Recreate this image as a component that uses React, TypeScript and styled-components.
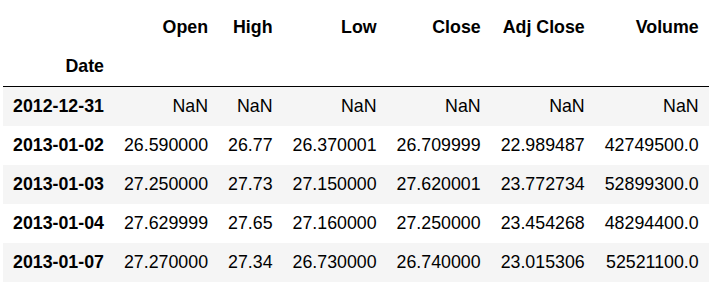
import React from 'react';
import styled, { createGlobalStyle } from 'styled-components';

const GlobalStyle = createGlobalStyle`
  body {
    margin: 0;
    background: #ffffff;
  }
`;

const Wrapper = styled.div`
  padding: 8px 0 0 3px;
`;

const Table = styled.table`
  border-collapse: collapse;
  border-spacing: 0;
  border: none;
  font-family: 'Liberation Sans', Arial, sans-serif;
  font-size: 17.8px;
  color: #000000;
`;

const Head = styled.thead`
  border-bottom: 1px solid #000000;
  vertical-align: bottom;
`;

const HeadCell = styled.th`
  text-align: right;
  vertical-align: middle;
  padding: 9px 10px;
  line-height: 21px;
  font-weight: bold;
  white-space: nowrap;
`;

const Row = styled.tr`
  &:nth-child(odd) {
    background: #f5f5f5;
  }
`;

const IndexCell = styled.th`
  text-align: right;
  vertical-align: middle;
  padding: 9px 10px;
  line-height: 21px;
  font-weight: bold;
  white-space: nowrap;
`;

const Cell = styled.td`
  text-align: right;
  vertical-align: middle;
  padding: 9px 10px;
  line-height: 21px;
  white-space: nowrap;
`;

const columns = ['Open', 'High', 'Low', 'Close', 'Adj Close', 'Volume'];

const rows: [string, string[]][] = [
  ['2012-12-31', ['NaN', 'NaN', 'NaN', 'NaN', 'NaN', 'NaN']],
  ['2013-01-02', ['26.590000', '26.77', '26.370001', '26.709999', '22.989487', '42749500.0']],
  ['2013-01-03', ['27.250000', '27.73', '27.150000', '27.620001', '23.772734', '52899300.0']],
  ['2013-01-04', ['27.629999', '27.65', '27.160000', '27.250000', '23.454268', '48294400.0']],
  ['2013-01-07', ['27.270000', '27.34', '26.730000', '26.740000', '23.015306', '52521100.0']],
];

export default function App() {
  return (
    <>
      <GlobalStyle />
      <Wrapper>
        <Table>
          <Head>
            <tr>
              <HeadCell />
              {columns.map((c) => (
                <HeadCell key={c}>{c}</HeadCell>
              ))}
            </tr>
            <tr>
              <HeadCell>Date</HeadCell>
              {columns.map((c) => (
                <HeadCell key={c} />
              ))}
            </tr>
          </Head>
          <tbody>
            {rows.map(([date, values]) => (
              <Row key={date}>
                <IndexCell>{date}</IndexCell>
                {values.map((v, i) => (
                  <Cell key={i}>{v}</Cell>
                ))}
              </Row>
            ))}
          </tbody>
        </Table>
      </Wrapper>
    </>
  );
}
